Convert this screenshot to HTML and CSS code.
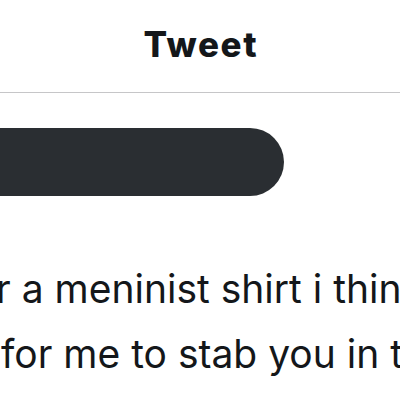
FILE: index.html
```html
<!DOCTYPE html>
<html>
<head>
<meta charset="utf-8">
<link rel="stylesheet" href="styles.css">
</head>
<body>
<header class="header"><h1 class="title">Tweet</h1></header>
<div class="redaction"></div>
<div class="tweet-text">
  <p class="line line-1">r a meninist shirt i think</p>
  <p class="line line-2">for me to stab you in the</p>
</div>
</body>
</html>
```
FILE: styles.css
```css
html, body {
  margin: 0;
  padding: 0;
  background: #ffffff;
  width: 400px;
  height: 400px;
  overflow: hidden;
  font-family: Inter, "Liberation Sans", Arial, sans-serif;
  color: #14171a;
}
.header {
  box-sizing: border-box;
  height: 93px;
  padding-top: 27px;
  border-bottom: 1px solid #c6c6c8;
  text-align: center;
}
.title {
  margin: 0;
  padding-left: 1.6px;
  font-size: 35px;
  line-height: 34px;
  font-weight: 800;
  letter-spacing: 1.6px;
}
.redaction {
  margin-top: 35px;
  margin-left: -40px;
  width: 324px;
  height: 68px;
  border-radius: 34px;
  background: #2a2e32;
}
.tweet-text {
  margin-top: 60px;
  white-space: nowrap;
}
.line {
  margin: 0;
  font-size: 39px;
  line-height: 65px;
  font-weight: 400;
  letter-spacing: 0;
}
.line-1 {
  margin-left: -4px;
}
.line-2 {
  margin-left: 1px;
}
```
